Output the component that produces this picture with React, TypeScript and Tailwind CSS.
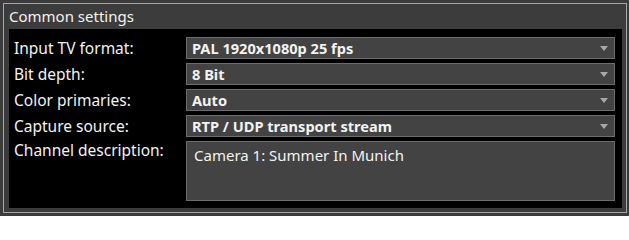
const FIELDS = [
  { label: "Input TV format:", value: "PAL 1920x1080p 25 fps" },
  { label: "Bit depth:", value: "8 Bit" },
  { label: "Color primaries:", value: "Auto" },
  { label: "Capture source:", value: "RTP / UDP transport stream" },
];

function Select({ value }: { value: string }) {
  return (
    <div className="h-[22px] flex items-center justify-between bg-[#434343] border border-[#6c6c6c] pl-[5px] pr-[6px]">
      <span className="text-[14.6px] font-bold text-[#f2f2f2] leading-none">{value}</span>
      <svg width="8" height="6" viewBox="0 0 8 6" className="mt-[1px]">
        <path d="M0 0H8L4 5Z" fill="#a8a8a8" />
      </svg>
    </div>
  );
}

export default function App() {
  return (
    <div
      className="w-[629px] h-[216px] bg-[#3c3c3c] pt-[3px] pl-[3px]"
      style={{ fontFamily: '"Noto Sans", "Open Sans", sans-serif' }}
    >
      <div className="w-[624px] h-[210px] border border-[#a6a6a6] flex flex-col px-[4px] pb-[4px]">
        <div className="h-[25px] flex items-center pl-[1px] text-[15px] text-[#f2f2f2]">Common settings</div>
        <div className="flex-1 bg-black ml-[1px] pt-[8px] pr-[7px] pb-[7px] pl-[5px] flex flex-col gap-[4px]">
          {FIELDS.map((f) => (
            <div key={f.label} className="flex items-center">
              <div className="w-[172px] text-[15.5px] text-[#f2f2f2] leading-none pt-[1px]">{f.label}</div>
              <div className="flex-1">
                <Select value={f.value} />
              </div>
            </div>
          ))}
          <div className="flex">
            <div className="w-[172px] text-[15.5px] text-[#f2f2f2] leading-[18px]">Channel description:</div>
            <div className="flex-1 h-[60px] bg-[#434343] border border-[#6c6c6c] px-[7px] pt-[2px] text-[15px] text-[#f2f2f2]">
              Camera 1: Summer In Munich
            </div>
          </div>
        </div>
      </div>
    </div>
  );
}
